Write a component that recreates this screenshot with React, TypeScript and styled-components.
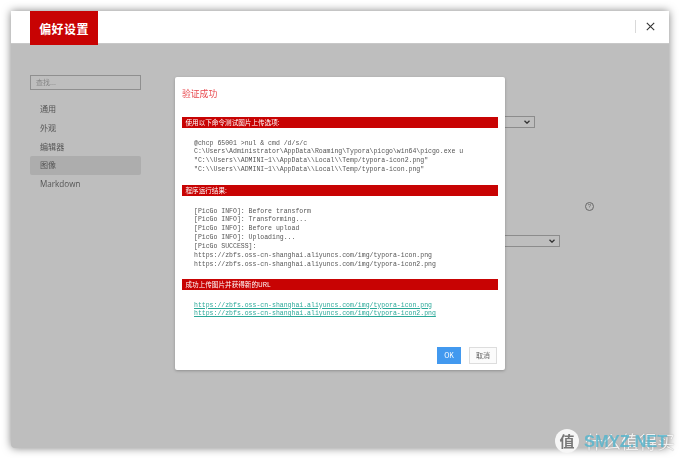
import React from 'react'
import styled, { createGlobalStyle } from 'styled-components'

const GlobalStyle = createGlobalStyle`
	html, body {
		margin: 0;
		padding: 0;
		background: #fff;
	}
	body {
		font-family: "Liberation Sans", "Noto Sans CJK SC", sans-serif;
	}
`

const Page = styled.div`
	position: relative;
	width: 680px;
	height: 459px;
	padding: 11px;
	box-sizing: border-box;
	overflow: hidden;
	filter: blur(0.35px);
`

const Window = styled.div`
	position: relative;
	display: flex;
	flex-direction: column;
	width: 658px;
	height: 437px;
	border-radius: 0 2px 4px 4px;
	background: #bebebe;
	box-shadow: 0 0 9px rgba(0, 0, 0, 0.5);
`

const Header = styled.header`
	display: flex;
	align-items: flex-start;
	flex: none;
	height: 32px;
	padding-left: 19px;
	background: #fff;
	border-bottom: 1px solid #c8c8c8;
	box-sizing: content-box;
`

const Logo = styled.div`
	flex: none;
	display: flex;
	align-items: center;
	justify-content: center;
	width: 68px;
	height: 34px;
	background: #c80303;
	color: #fff;
	font-family: "Noto Sans CJK SC", sans-serif;
	font-size: 12px;
	font-weight: 700;
	letter-spacing: 0.4px;
	position: relative;
	z-index: 1;
`

const HeaderActions = styled.div`
	display: flex;
	align-items: center;
	margin-left: auto;
	height: 30px;
`

const Divider = styled.div`
	width: 1px;
	height: 13px;
	background: #d9d9d9;
`

const CloseButton = styled.div`
	display: flex;
	margin: 0 14.5px 0 10px;
	color: #333;
`

const Body = styled.div`
	display: flex;
	flex: 1;
	padding: 31px 0 0 19px;
`

const Sidebar = styled.nav`
	flex: none;
	width: 111px;
`

const Search = styled.div`
	height: 15px;
	padding-left: 5px;
	border: 1px solid #8f8f8f;
	box-sizing: border-box;
	color: #858585;
	font-family: "Noto Sans CJK SC", sans-serif;
	font-size: 7px;
	line-height: 13px;
`

const NavList = styled.div`
	display: flex;
	flex-direction: column;
	margin-top: 10px;
`

const NavItem = styled.div<{ $active?: boolean }>`
	height: 18.8px;
	padding-left: 10px;
	border-radius: 2px;
	background: ${(p) => (p.$active ? '#adadad' : 'transparent')};
	color: #555;
	font-family: "Open Sans", "Noto Sans CJK SC", sans-serif;
	font-size: 8.1px;
	line-height: 18.8px;
`

const Settings = styled.div`
	position: relative;
	flex: 1;
`

const SelectBox = styled.div<{ $top: number; $left: number; $width: number }>`
	position: absolute;
	top: ${(p) => p.$top}px;
	left: ${(p) => p.$left}px;
	width: ${(p) => p.$width}px;
	height: 12px;
	display: flex;
	align-items: center;
	justify-content: flex-end;
	padding-right: 4px;
	border: 1px solid #8c8c8c;
	box-sizing: border-box;
	color: #333;
`

const HelpMark = styled.div`
	position: absolute;
	top: 127px;
	left: 444px;
	width: 7px;
	height: 7px;
	border: 1px solid #686868;
	border-radius: 50%;
	color: #686868;
	font-size: 6px;
	line-height: 7px;
	text-align: center;
`

const Dialog = styled.div`
	position: absolute;
	top: 66px;
	left: 164px;
	display: flex;
	flex-direction: column;
	width: 330px;
	height: 293px;
	padding: 0 7px;
	box-sizing: border-box;
	border-radius: 2px;
	background: #fff;
	box-shadow: 0 1px 3px rgba(0, 0, 0, 0.25);
`

const DialogTitle = styled.h3`
	margin: 0;
	height: 40px;
	padding-top: 10px;
	box-sizing: border-box;
	color: #e8484d;
	font-family: "Noto Sans CJK SC", sans-serif;
	font-size: 8.8px;
	font-weight: 400;
	line-height: 13px;
`

const Banner = styled.div`
	flex: none;
	height: 11px;
	padding-left: 3.5px;
	background: #c80303;
	color: #fff;
	font-family: "Noto Sans CJK SC", "Liberation Sans", sans-serif;
	font-size: 6.6px;
	line-height: 11px;
`

const CodeBlock = styled.pre<{ $gap: number; $indent?: number }>`
	flex: none;
	margin: 0;
	height: ${(p) => p.$gap}px;
	padding: 11.5px 0 0 ${(p) => p.$indent ?? 12}px;
	box-sizing: border-box;
	color: #555;
	font-family: "Liberation Mono", monospace;
	font-size: 6.5px;
	line-height: 8.85px;
`

const ResultLink = styled.a`
	color: #2aa898;
	text-decoration: underline;
`

const DialogFooter = styled.div`
	display: flex;
	justify-content: flex-end;
	gap: 8px;
	margin-top: auto;
	padding: 0 1px 6px 0;
`

const DialogButton = styled.div<{ $primary?: boolean }>`
	height: 17px;
	width: ${(p) => (p.$primary ? 24 : 28)}px;
	box-sizing: border-box;
	border: ${(p) => (p.$primary ? 'none' : '1px solid #ddd')};
	background: ${(p) => (p.$primary ? '#4299ef' : '#fbfbfb')};
	color: ${(p) => (p.$primary ? '#fff' : '#666')};
	font-family: "Noto Sans CJK SC", sans-serif;
	font-size: 7px;
	line-height: ${(p) => (p.$primary ? 17 : 15)}px;
	text-align: center;
`

const Watermark = styled.div`
	position: absolute;
	top: 429px;
	left: 555px;
	display: flex;
	align-items: center;
	gap: 6px;
	width: 125px;
	height: 24px;
`

const WatermarkBadge = styled.div`
	flex: none;
	width: 24px;
	height: 24px;
	border-radius: 50%;
	background: #f6f6f6;
	color: #777;
	font-family: "Noto Sans CJK SC", sans-serif;
	font-size: 15px;
	font-weight: 700;
	line-height: 24px;
	text-align: center;
`

const WatermarkText = styled.div`
	color: rgba(245, 245, 245, 0.95);
	font-family: "Noto Sans CJK SC", sans-serif;
	font-size: 18px;
	font-weight: 400;
	line-height: 24px;
	white-space: nowrap;
	text-shadow: 0 0 1px rgba(0, 0, 0, 0.35);
`

const SiteMark = styled.div`
	position: absolute;
	top: 0;
	left: 29px;
	color: rgba(80, 180, 205, 0.8);
	font-family: "Liberation Sans", sans-serif;
	font-size: 16.5px;
	font-weight: 700;
	line-height: 24px;
	white-space: nowrap;
`

const CloseIcon = () => (
	<svg width="9" height="9" viewBox="0 0 9 9" fill="none" stroke="currentColor" strokeWidth="1.1">
		<path d="M0.8 0.8L8.2 8.2M8.2 0.8L0.8 8.2" />
	</svg>
)

const ChevronIcon = () => (
	<svg width="6" height="4" viewBox="0 0 6 4" fill="none" stroke="currentColor" strokeWidth="1.3">
		<path d="M0.5 0.7L3 3.2L5.5 0.7" />
	</svg>
)

const navItems = ['通用', '外观', '编辑器', '图像', 'Markdown']

const commandText = `@chcp 65001 >nul & cmd /d/s/c
C:\\Users\\Administrator\\AppData\\Roaming\\Typora\\picgo\\win64\\picgo.exe u
"C:\\\\Users\\\\ADMINI~1\\\\AppData\\\\Local\\\\Temp/typora-icon2.png"
"C:\\\\Users\\\\ADMINI~1\\\\AppData\\\\Local\\\\Temp/typora-icon.png"`

const outputText = `[PicGo INFO]: Before transform
[PicGo INFO]: Transforming...
[PicGo INFO]: Before upload
[PicGo INFO]: Uploading...
[PicGo SUCCESS]:
https://zbfs.oss-cn-shanghai.aliyuncs.com/img/typora-icon.png
https://zbfs.oss-cn-shanghai.aliyuncs.com/img/typora-icon2.png`

const App = () => {
	return (
		<Page>
			<GlobalStyle />
			<Window>
				<Header>
					<Logo>偏好设置</Logo>
					<HeaderActions>
						<Divider />
						<CloseButton>
							<CloseIcon />
						</CloseButton>
					</HeaderActions>
				</Header>
				<Body>
					<Sidebar>
						<Search>查找...</Search>
						<NavList>
							{navItems.map((item) => (
								<NavItem key={item} $active={item === '图像'}>
									{item}
								</NavItem>
							))}
						</NavList>
					</Sidebar>
					<Settings>
						<SelectBox $top={41} $left={330} $width={64}>
							<ChevronIcon />
						</SelectBox>
						<HelpMark>?</HelpMark>
						<SelectBox $top={160} $left={309} $width={110}>
							<ChevronIcon />
						</SelectBox>
					</Settings>
				</Body>
				<Dialog>
					<DialogTitle>验证成功</DialogTitle>
					<Banner>使用以下命令测试图片上传选项:</Banner>
					<CodeBlock $gap={57}>{commandText}</CodeBlock>
					<Banner>程序运行结果:</Banner>
					<CodeBlock $gap={83}>{outputText}</CodeBlock>
					<Banner>成功上传图片并获得新的URL</Banner>
					<CodeBlock $gap={40}>
						<ResultLink>https://zbfs.oss-cn-shanghai.aliyuncs.com/img/typora-icon.png</ResultLink>
						{'\n'}
						<ResultLink>https://zbfs.oss-cn-shanghai.aliyuncs.com/img/typora-icon2.png</ResultLink>
					</CodeBlock>
					<DialogFooter>
						<DialogButton $primary>OK</DialogButton>
						<DialogButton>取消</DialogButton>
					</DialogFooter>
				</Dialog>
			</Window>
			<Watermark>
				<WatermarkBadge>值</WatermarkBadge>
				<WatermarkText>什么值得买</WatermarkText>
				<SiteMark>SMYZ.NET</SiteMark>
			</Watermark>
		</Page>
	)
}
export default App
